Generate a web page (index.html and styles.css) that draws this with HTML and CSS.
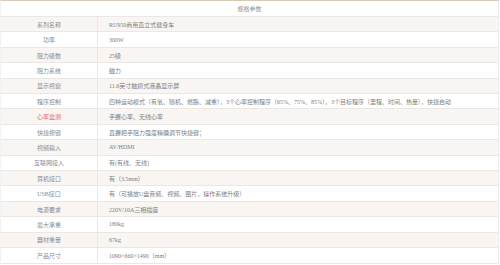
FILE: index.html
```html
<!DOCTYPE html>
<html lang="zh">
<head>
<meta charset="utf-8">
<title>规格参数</title>
<link rel="stylesheet" href="styles.css">
</head>
<body>
<div class="spec">
  <div class="title">规格参数</div>
  <div class="row"><div class="label">系列名称</div><div class="value">RU950商用直立式健身车</div></div>
  <div class="row"><div class="label">功率</div><div class="value">300W</div></div>
  <div class="row"><div class="label">阻力级数</div><div class="value">25级</div></div>
  <div class="row"><div class="label">阻力系统</div><div class="value">磁力</div></div>
  <div class="row"><div class="label">显示视窗</div><div class="value">11.6英寸触摸式液晶显示屏</div></div>
  <div class="row"><div class="label">程序控制</div><div class="value">四种运动模式（有氧、随机、燃脂、减重），3个心率控制程序（65%、75%、85%），3个目标程序（里程、时间、热量），快捷启动</div></div>
  <div class="row"><div class="label red">心率监测</div><div class="value">手握心率、无线心率</div></div>
  <div class="row"><div class="label">快捷按键</div><div class="value">直握把手阻力强度精确调节快捷键；</div></div>
  <div class="row"><div class="label">视频输入</div><div class="value">AV/HDMI</div></div>
  <div class="row"><div class="label">互联网接入</div><div class="value">有(有线、无线)</div></div>
  <div class="row"><div class="label">耳机接口</div><div class="value">有（3.5mm）</div></div>
  <div class="row"><div class="label">USB接口</div><div class="value">有（可播放U盘音频、视频、图片，操作系统升级）</div></div>
  <div class="row"><div class="label">电源要求</div><div class="value">220V/10A三相插座</div></div>
  <div class="row"><div class="label">最大承重</div><div class="value">180kg</div></div>
  <div class="row"><div class="label">器材重量</div><div class="value">67kg</div></div>
  <div class="row"><div class="label">产品尺寸</div><div class="value">1090×660×1490（mm）</div></div>
</div>
</body>
</html>
```
FILE: styles.css
```css
html, body {
  margin: 0;
  padding: 0;
  background: #ffffff;
}

.spec {
  width: 499px;
  border-top: 1px solid #d8c8b4;
  border-right: 1px solid #ececec;
  border-left: 1px solid #f2f2f2;
  box-sizing: border-box;
  font-family: "Liberation Serif", "Noto Sans CJK SC", serif;
  font-size: 6px;
  color: #808080;
}

.title {
  height: 16px;
  line-height: 16px;
  text-align: center;
  color: #939393;
  border-bottom: 1px solid #ebe7e4;
  box-sizing: border-box;
}

.row {
  display: flex;
  height: 15.42px;
  box-sizing: border-box;
  border-bottom: 1px solid #ebe7e4;
  align-items: stretch;
}

.row:nth-child(even) {
  background: #f9f5f3;
}

.label {
  width: 96px;
  flex: none;
  display: flex;
  align-items: center;
  justify-content: center;
  color: #8c8c8c;
  border-right: 1px solid #ebe7e4;
}

.label.red {
  color: #e46a6a;
}

.value {
  flex: 1;
  display: flex;
  align-items: center;
  padding-left: 11px;
  white-space: nowrap;
}
```
